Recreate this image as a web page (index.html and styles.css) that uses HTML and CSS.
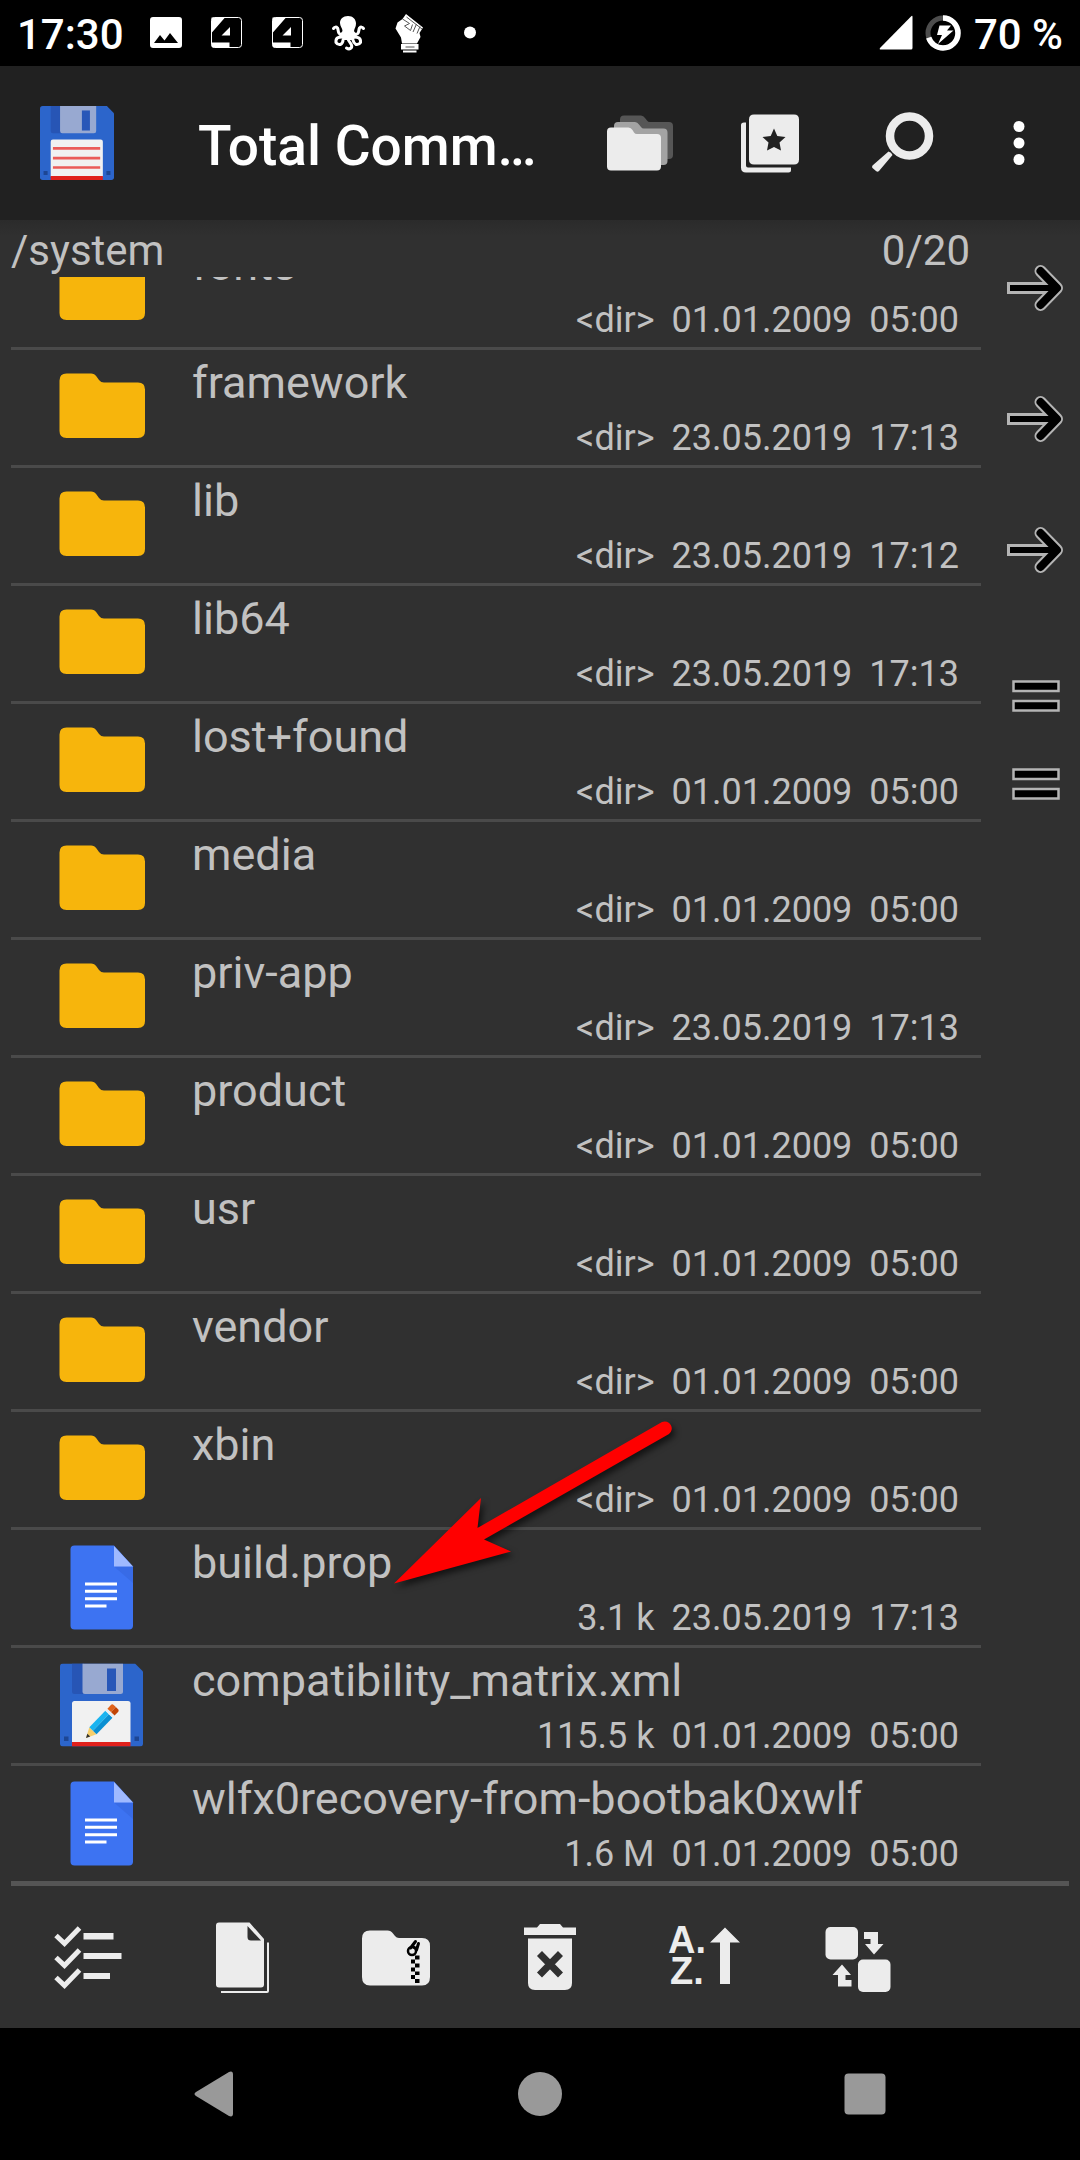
FILE: index.html
```html
<!DOCTYPE html>
<html lang="en">
<head>
<meta charset="utf-8">
<meta name="viewport" content="width=device-width, initial-scale=1">
<title>Total Commander</title>
<link rel="stylesheet" href="styles.css">
</head>
<body>
<svg class="defs" aria-hidden="true">
  <symbol id="folder" viewBox="0 0 96 96">
    <path fill="#f7b50c" d="M12.500 13.500H37Q40.500 13.500 42.500 16.500L45 20Q47 22.500 50 22.500H84Q91 22.500 91 29.500V71Q91 78 84 78H12.500Q5.500 78 5.500 71V20.500Q5.500 13.500 12.500 13.500Z"/>
  </symbol>
  <symbol id="doc" viewBox="0 0 96 96">
    <path fill="#3d73f2" d="M20.500 5.500H60L79 26.500V85.500Q79 89.500 75 89.500H20.500Q16.500 89.500 16.500 85.500V9.500Q16.500 5.500 20.500 5.500Z"/>
    <path fill="#386be6" d="M60 26.500H79V43Z"/>
    <path fill="#9fb9ff" d="M60 6L79 26.500H60Z"/>
    <path stroke="#fff" stroke-width="3" d="M31 44H63M31 51.300H63M31 58.700H63M31 66H52.500"/>
  </symbol>
  <symbol id="disk" viewBox="0 0 83 83">
    <path fill="#2c65cb" d="M3 0H75L83 8V80Q83 83 80 83H3Q0 83 0 80V3Q0 0 3 0Z"/>
    <path fill="#2755b5" d="M12 0H24V30.500H14.500Q12 30.500 12 28Z"/>
    <path fill="#98a9d1" d="M22.500 0H63V28Q63 30.500 60.500 30.500H25Q22.500 30.500 22.500 28Z"/>
    <path fill="#2857b8" d="M47 5H56V27.500H47Z"/>
    <path fill="#f1f1f1" d="M14.500 37.500H68Q70.500 37.500 70.500 40V79H12V40Q12 37.500 14.500 37.500Z"/>
    <path fill="#e0201b" d="M12 78.500H70.500V83H12Z"/>
    <path fill="#1d4694" d="M4 73H8.500V77.500H4ZM74.500 73H79V77.500H74.500Z"/>
  </symbol>
  <symbol id="jump-arrow" viewBox="0 0 56 46">
    <path d="M0 23H46" fill="none" stroke="#b4b4b4" stroke-width="12"/>
    <path d="M33.500 6L50 23L33.500 40" fill="none" stroke="#b4b4b4" stroke-width="12" stroke-linecap="round" stroke-linejoin="round"/>
    <path d="M3 23H48" fill="none" stroke="#000" stroke-width="6"/>
    <path d="M33.500 6L50 23L33.500 40" fill="none" stroke="#000" stroke-width="8" stroke-linecap="round" stroke-linejoin="round"/>
  </symbol>
</svg>

<div class="screen">
  <header class="status">
    <span class="clock">17:30</span>
    <div class="notices">
      <svg class="n-icon" viewBox="0 0 36 40"><path fill="#fff" fill-rule="evenodd" d="M5 4H31Q34 4 34 7V32Q34 35 31 35H5Q2 35 2 32V7Q2 4 5 4ZM6 30H30L22 20L16.500 27.500L12 22Z"/></svg>
      <svg class="n-icon" viewBox="0 0 36 40"><rect x="2.500" y="4.500" width="30" height="30" rx="3" fill="#000" stroke="#fff"/><path fill="#fff" d="M2.500 4.500H16L2.500 20ZM2.500 29.500H20.500V34.500H4Q2.500 34.500 2.500 32ZM21 14V22.500H12.500Z"/></svg>
      <svg class="n-icon" viewBox="0 0 36 40"><rect x="2.500" y="4.500" width="30" height="30" rx="3" fill="#000" stroke="#fff"/><path fill="#fff" d="M2.500 4.500H16L2.500 20ZM2.500 29.500H20.500V34.500H4Q2.500 34.500 2.500 32ZM21 14V22.500H12.500Z"/></svg>
      <svg class="n-icon" viewBox="0 0 36 40"><path fill="#fff" d="M17 3C22 3 25 6.500 25 10.500C25 14 23.500 15 23 18L26 23L22 27H13L8 23L11.500 18C11.500 15 9 13.500 9 10C9 6 12 3 17 3Z"/><path fill="none" stroke="#fff" stroke-width="3" stroke-linecap="round" d="M12 21C6 22 8 18 6.500 15Q4.500 13 2.500 15.500M23 21C29 22 27 18 28.500 15Q30.500 13 32.500 15.500M11 24C7 24 4.500 25 5 29.500Q6.500 32 9.500 31.500Q12 30 12 27M23 24C27 24 30 25 29.500 29.500Q28 32 25 31.500Q22.500 30 22 27M17 26C18 30 22 31 20.500 34.500Q18.500 37 15.500 35"/></svg>
      <svg class="n-icon" viewBox="0 0 36 40"><path fill="#fff" d="M14 1L31 14.500L27.500 20L28.500 24L25 30.500H10L9 24.500L3.500 15.500L5.500 9.500L10.500 6ZM9 31H26.500V36.500H9ZM11 37.500H24.500V39.500H11Z"/><path fill="none" stroke="#555" d="M10.500 6L17.500 10.500L12.500 13L18.500 17.500L20.500 11.500M14.500 4L30 16M24.500 11L21 19M28 13.500L25 20.500M13.500 34H22.500"/></svg>
      <svg class="n-icon" viewBox="0 0 36 40"><circle cx="17" cy="19.500" r="6" fill="#fff"/></svg>
    </div>
    <svg class="signal" viewBox="0 0 34 36"><path fill="#fff" d="M32 1.500Q33.500 0 33.500 2V33Q33.500 34.500 32 34.500H2Q0 34.500 1 33Z"/></svg>
    <svg class="battery" viewBox="0 0 36 36"><circle cx="18" cy="18" r="15" fill="none" stroke="#4d4d4d" stroke-width="5"/><circle cx="18" cy="18" r="15" fill="none" stroke="#fff" stroke-width="5.500" pathLength="100" stroke-dasharray="70 30" transform="rotate(-90 18 18)"/><path fill="#fff" d="M14.500 10.500H26L22 15.500H28.500L13 29L17 20H12Z"/></svg>
    <span class="percent">70 %</span>
  </header>

  <div class="appbar">
    <svg class="logo" viewBox="0 0 83 83" role="img" aria-label="Disk"><use href="#disk"/><path stroke="#ea5b58" stroke-width="3" d="M14.500 47.500H67.500M14.500 58.500H67.500M14.500 69H67.500"/></svg>
    <h1 class="title">Total Commander</h1>
    <button class="action" aria-label="Folders"><svg class="icon" viewBox="0 0 80 80">
      <path fill="#565656" d="M26 12.500H43Q45.500 12.500 47 15L49 17.500Q50 19 52 19H71Q75 19 75 23V52Q75 56 71 56H22V16.500Q22 12.500 26 12.500Z"/>
      <path fill="#a3a3a3" d="M20 19H37Q39.500 19 41 21.500L43 24Q44 25.500 46 25.500H65.500Q69.500 25.500 69.500 29.500V58Q69.500 62 65.500 62H16V23Q16 19 20 19Z"/>
      <path fill="#ececec" d="M13 24.500H30.500Q33 24.500 34.500 27L36 29.500Q37 31 39 31H59Q63 31 63 35V63.500Q63 67.500 59 67.500H13Q9 67.500 9 63.500V28.500Q9 24.500 13 24.500Z"/></svg></button>
    <button class="action" aria-label="Bookmarks"><svg class="icon" viewBox="0 0 80 80"><path fill="#ececec" fill-rule="evenodd" d="M24 11.500H64Q69 11.500 69 16.500V56.500Q69 61.500 64 61.500H24Q19 61.500 19 56.500V16.500Q19 11.500 24 11.500ZM44 25.500L40.700 33L32.500 34L38.500 39.500L37 47.500L44 44L51 47.500L49.500 39.500L55.500 34L47.300 33Z"/><path fill="#ececec" d="M14 19.500H16V62.500Q16 64.500 18 64.500H61V67Q61 69.500 58.500 69.500H16Q11 69.500 11 64.500V22Q11 19.500 14 19.500Z"/></svg></button>
    <button class="action" aria-label="Search"><svg class="icon" viewBox="0 0 80 80"><circle cx="47.500" cy="33" r="19.500" fill="none" stroke="#ececec" stroke-width="8.500"/><path fill="#ececec" d="M26.500 48.500Q29.500 49 30.500 52L17 68Q15.500 69.500 14 68L10.500 65Q9.500 64 10.500 62.500Z"/></svg></button>
    <button class="action more" aria-label="More options"><svg class="icon" viewBox="0 0 80 80"><g fill="#fff"><circle cx="40" cy="23.500" r="5.500"/><circle cx="40" cy="40" r="5.500"/><circle cx="40" cy="56.500" r="5.500"/></g></svg></button>
  </div>

  <main class="content">
    <section class="panel">
      <div class="path"><span>/system</span><span>0/20</span></div>
      <ul class="files">
        <li class="row"><svg class="file-icon"><use href="#folder"/></svg><span class="name">fonts</span><span class="meta"><span>&lt;dir&gt;</span><span>01.01.2009</span><span>05:00</span></span></li>
        <li class="row"><svg class="file-icon"><use href="#folder"/></svg><span class="name">framework</span><span class="meta"><span>&lt;dir&gt;</span><span>23.05.2019</span><span>17:13</span></span></li>
        <li class="row"><svg class="file-icon"><use href="#folder"/></svg><span class="name">lib</span><span class="meta"><span>&lt;dir&gt;</span><span>23.05.2019</span><span>17:12</span></span></li>
        <li class="row"><svg class="file-icon"><use href="#folder"/></svg><span class="name">lib64</span><span class="meta"><span>&lt;dir&gt;</span><span>23.05.2019</span><span>17:13</span></span></li>
        <li class="row"><svg class="file-icon"><use href="#folder"/></svg><span class="name">lost+found</span><span class="meta"><span>&lt;dir&gt;</span><span>01.01.2009</span><span>05:00</span></span></li>
        <li class="row"><svg class="file-icon"><use href="#folder"/></svg><span class="name">media</span><span class="meta"><span>&lt;dir&gt;</span><span>01.01.2009</span><span>05:00</span></span></li>
        <li class="row"><svg class="file-icon"><use href="#folder"/></svg><span class="name">priv-app</span><span class="meta"><span>&lt;dir&gt;</span><span>23.05.2019</span><span>17:13</span></span></li>
        <li class="row"><svg class="file-icon"><use href="#folder"/></svg><span class="name">product</span><span class="meta"><span>&lt;dir&gt;</span><span>01.01.2009</span><span>05:00</span></span></li>
        <li class="row"><svg class="file-icon"><use href="#folder"/></svg><span class="name">usr</span><span class="meta"><span>&lt;dir&gt;</span><span>01.01.2009</span><span>05:00</span></span></li>
        <li class="row"><svg class="file-icon"><use href="#folder"/></svg><span class="name">vendor</span><span class="meta"><span>&lt;dir&gt;</span><span>01.01.2009</span><span>05:00</span></span></li>
        <li class="row"><svg class="file-icon"><use href="#folder"/></svg><span class="name">xbin</span><span class="meta"><span>&lt;dir&gt;</span><span>01.01.2009</span><span>05:00</span></span></li>
        <li class="row"><svg class="file-icon"><use href="#doc"/></svg><span class="name">build.prop</span><span class="meta"><span>3.1 k</span><span>23.05.2019</span><span>17:13</span></span>
          <svg class="pointer" viewBox="0 0 310 160" aria-hidden="true"><path fill="#f00" d="M10 172.500L97 87L93.500 117L278 11A7 7 0 0 1 285 23L100 128.500L127 140.500Z"/></svg></li>
        <li class="row"><svg class="file-icon" viewBox="0 0 96 96"><use href="#disk" x="6" y="5.500" width="83" height="83"/><g transform="translate(32 80) rotate(-46)"><path fill="#f7cf6b" d="M0 0L10 -5V5Z"/><path fill="#333" d="M0 0L4 -2V2Z"/><path fill="#1ab4f0" d="M10 -5H33V0H10Z"/><path fill="#0a8fd2" d="M10 0H33V5H10Z"/><path fill="#e8eef2" d="M33 -5H36V5H33Z"/><path fill="#e0631a" d="M36 -5H41Q43 -5 43 -3V0H36Z"/><path fill="#c24405" d="M36 0H43V3Q43 5 41 5H36Z"/></g></svg><span class="name">compatibility_matrix.xml</span><span class="meta"><span>115.5 k</span><span>01.01.2009</span><span>05:00</span></span></li>
        <li class="row"><svg class="file-icon"><use href="#doc"/></svg><span class="name">wlfx0recovery-from-bootbak0xwlf</span><span class="meta"><span>1.6 M</span><span>01.01.2009</span><span>05:00</span></span></li>
      </ul>
    </section>
    <aside class="side">
      <button class="jump" aria-label="Go 1"><svg class="arrow"><use href="#jump-arrow"/></svg></button>
      <button class="jump" aria-label="Go 2"><svg class="arrow"><use href="#jump-arrow"/></svg></button>
      <button class="jump" aria-label="Go 3"><svg class="arrow"><use href="#jump-arrow"/></svg></button>
      <div class="bars-group">
        <button class="bars" aria-label="Button 4"><svg class="bars-icon" viewBox="0 0 48 32"><path fill="#000" stroke="#b4b4b4" stroke-width="2.500" d="M1.500 1.500H46.500V11H1.500ZM1.500 21H46.500V30.500H1.500Z"/></svg></button>
        <button class="bars" aria-label="Button 5"><svg class="bars-icon" viewBox="0 0 48 32"><path fill="#000" stroke="#b4b4b4" stroke-width="2.500" d="M1.500 1.500H46.500V11H1.500ZM1.500 21H46.500V30.500H1.500Z"/></svg></button>
      </div>
    </aside>
  </main>

  <div class="toolbar">
    <button class="tool" aria-label="Select"><svg class="icon" viewBox="0 0 80 80"><path fill="none" stroke="#ececec" stroke-width="5" d="M8 18.500L16.500 26.500L31.500 11M8 40.500L16.500 48.500L31.500 33M8 60.500L16.500 68.500L31.500 53"/><path fill="#ececec" d="M35.500 16H65.500V22.500H35.500ZM35.500 36H73.500V42H35.500ZM35.500 56H62V62H35.500Z"/></svg></button>
    <button class="tool" aria-label="Copy"><svg class="icon" viewBox="0 0 80 80"><path fill="#ececec" fill-rule="evenodd" d="M17 5.500H47.500L62 22V67.500Q62 70.500 59 70.500H17Q14 70.500 14 67.500V8.500Q14 5.500 17 5.500ZM45.500 9V20Q45.500 23.500 49 23.500H59Z"/><path fill="none" stroke="#ececec" stroke-width="2" d="M19 75H65Q66 75 66 74V25.500"/></svg></button>
    <button class="tool" aria-label="Pack"><svg class="icon" viewBox="0 0 80 80"><path fill="#ececec" d="M14 13.500H31.500Q35 13.500 37 16.500L39 19Q40.500 21 43 21H66Q74 21 74 29V60Q74 68.500 66 68.500H14Q6 68.500 6 60V21.500Q6 13.500 14 13.500Z"/><path fill="#000" d="M59 38.500H63.500V42.500H59ZM55 42.500H59V46.500H55ZM59 46.500H63.500V50.500H59ZM55 50.500H59V54.500H55ZM59 54.500H63.500V58H59ZM55 58H59V62H55ZM59 62H63.500V66H59Z"/><path fill="none" stroke="#000" stroke-width="3" stroke-linecap="round" d="M59.500 24.500L54.500 31M62.500 26.500L60.500 33M57.500 30L60 31.500"/><circle cx="56" cy="34" r="4" fill="none" stroke="#000" stroke-width="2.500"/></svg></button>
    <button class="tool" aria-label="Delete"><svg class="icon" viewBox="0 0 80 80"><path fill="#ececec" d="M30 7H50L53 10.500H66V18H14V10.500H27ZM18 21.500H62V66Q62 73 55 73H25Q18 73 18 66Z"/><path stroke="#303030" stroke-width="7" d="M29.500 36.500L50.500 58M50.500 36.500L29.500 58"/></svg></button>
    <button class="tool" aria-label="Sort"><svg class="icon" viewBox="0 0 80 80"><g class="sort-label"><text x="4" y="36">A.</text><text x="6" y="67">Z.</text></g><path fill="#ececec" d="M61 10.500L76 25.500H66V67H56V25.500H46Z"/></svg></button>
    <button class="tool" aria-label="Swap"><svg class="icon" viewBox="0 0 80 80"><g fill="#ececec"><rect x="7.500" y="10" width="32.500" height="32.500" rx="5"/><rect x="40" y="42.500" width="32.500" height="32.500" rx="5"/><path d="M46 15H60V27H65.500L56 37.500L47 27H52.500V22H46ZM24 47.500L33 58H27.500V63H33.500V69.500H20V58H14.500Z"/></g></svg></button>
  </div>

  <nav class="navbar">
    <button class="nav" aria-label="Back"><svg class="nav-icon" viewBox="0 0 48 48"><path fill="#999" d="M5 22L38 2Q42 0.500 42 4.500V43.500Q42 47.500 38 46L5 26Q2 24 5 22Z"/></svg></button>
    <button class="nav" aria-label="Home"><svg class="nav-icon" viewBox="0 0 48 48"><circle cx="24" cy="24" r="22" fill="#999"/></svg></button>
    <button class="nav" aria-label="Recents"><svg class="nav-icon" viewBox="0 0 48 48"><rect x="3.500" y="3.500" width="41" height="41" rx="4" fill="#999"/></svg></button>
  </nav>
</div>
</body>
</html>
```

FILE: styles.css
```css
* { box-sizing: border-box; }

body {
  margin: 0;
  background: #303030;
  color: #c1c1c1;
  font-family: Roboto, "Noto Sans", sans-serif;
}

button {
  display: flex;
  align-items: center;
  justify-content: center;
  padding: 0;
  border: 0;
  background: none;
  cursor: pointer;
}

svg { display: block; flex: none; }

.defs { position: absolute; width: 0; height: 0; }

.screen {
  display: flex;
  flex-direction: column;
  height: 100vh;
}

/* Status bar */
.status {
  display: flex;
  flex: none;
  align-items: center;
  height: 66px;
  padding: 0 17px;
  background: #000;
  color: #fff;
  font-size: 42px;
  font-weight: 500;
}

.clock, .percent { padding-top: 2px; }

.notices {
  display: flex;
  flex: 1;
  gap: 25px;
  margin-left: 24px;
}

.n-icon { width: 36px; height: 40px; }
.signal { width: 34px; height: 36px; }
.battery { width: 36px; height: 36px; margin: 0 13px 0 12px; }

/* Application bar */
.appbar {
  display: flex;
  flex: none;
  align-items: center;
  height: 154px;
  padding: 0 10px 0 40px;
  background: #212121;
}

.logo { width: 74px; height: 74px; }

.title {
  flex: 1;
  min-width: 0;
  margin: 0 30px 0 84px;
  padding-top: 6px;
  overflow: hidden;
  color: #fff;
  font-size: 55px;
  font-weight: 500;
  text-overflow: ellipsis;
  white-space: nowrap;
}

.action { width: 132px; height: 132px; }
.more { width: 102px; }
.icon { width: 80px; height: 80px; }

/* File panel */
.content {
  display: flex;
  flex: 1;
  min-height: 0;
  background: linear-gradient(#2b2b2b, #303030 16px);
}

.panel {
  display: flex;
  flex: 1;
  flex-direction: column;
  min-width: 0;
}

.path {
  display: flex;
  flex: none;
  justify-content: space-between;
  height: 57px;
  padding: 0 11px;
  font-size: 42px;
  line-height: 62px;
}

.files {
  display: flex;
  flex: 1;
  flex-direction: column;
  justify-content: flex-end;
  min-height: 0;
  margin: 0 0 -3px;
  padding: 0 0 0 11px;
  overflow: hidden;
  list-style: none;
}

.row {
  position: relative;
  display: grid;
  flex: none;
  grid-template-columns: 96px 1fr;
  grid-template-rows: 66px 44px;
  column-gap: 42px;
  height: 118px;
  padding: 0 22px 0 43px;
  border-bottom: 3px solid #4a4a4a;
}

.row:last-child { border-bottom-color: transparent; }

.file-icon {
  grid-row: 1 / 3;
  width: 96px;
  height: 96px;
  margin-top: 10px;
}

.name {
  font-size: 45px;
  line-height: 66px;
  white-space: nowrap;
}

.meta {
  display: flex;
  grid-column: 2;
  gap: 17px;
  justify-content: flex-end;
  font-size: 36px;
  line-height: 44px;
}

.pointer {
  position: absolute;
  top: -119px;
  left: 373px;
  z-index: 1;
  width: 310px;
  height: 160px;
  overflow: visible;
  filter: drop-shadow(3px 4px 3px rgba(0, 0, 0, 0.6));
}

/* Button column */
.side {
  flex: none;
  width: 99px;
  padding-top: 2px;
}

.jump { width: 99px; height: 131px; padding-left: 9px; }
.arrow { width: 56px; height: 46px; }
.bars-group { padding-top: 37px; }
.bars { width: 99px; height: 88px; padding-left: 11px; }
.bars-icon { width: 48px; height: 32px; }

/* Bottom toolbar */
.toolbar {
  z-index: 1;
  display: flex;
  flex: none;
  align-items: center;
  height: 147px;
  margin: 0 11px;
  border-top: 5px solid #555;
}

.tool { width: 154px; height: 132px; }

.sort-label {
  fill: #ececec;
  font: bold 38px "Liberation Sans", sans-serif;
}

/* System navigation */
.navbar {
  display: flex;
  flex: none;
  justify-content: center;
  height: 132px;
  background: #000;
}

.nav { width: 325px; height: 132px; }
.nav-icon { width: 48px; height: 48px; }
```
